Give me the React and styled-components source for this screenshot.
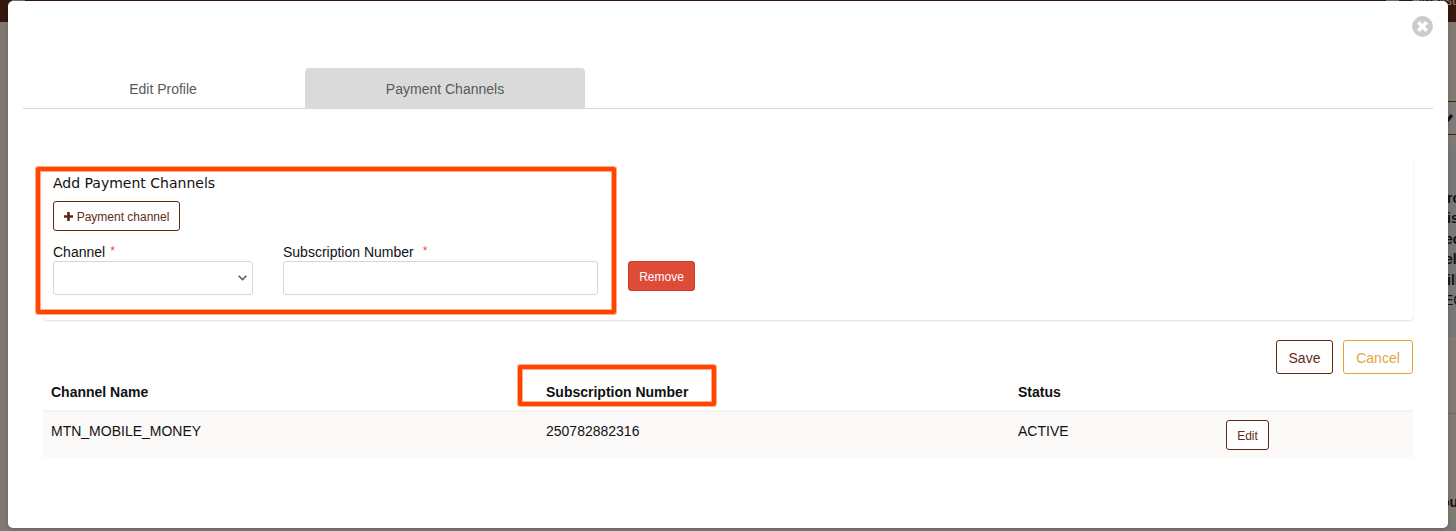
import React from "react";
import styled, { createGlobalStyle } from "styled-components";

const Global = createGlobalStyle`
  * { box-sizing: border-box; }
  body {
    margin: 0;
    overflow: hidden;
    font-family: "Liberation Sans", Arial, sans-serif;
    font-size: 14px;
    line-height: 20px;
    color: #111;
    background: #7a7a7a;
  }
`;

const Page = styled.div`
  position: relative;
  display: flex;
  flex-direction: column;
  width: 1456px;
  height: 531px;
  overflow: hidden;
`;

const TopBar = styled.header`
  display: flex;
  justify-content: space-between;
  flex: none;
  height: 22px;
  padding: 0 0 0 12px;
  background: #34180e;
`;

const Chip = styled.span`
  width: ${(p) => p.$w}px;
  height: 10px;
  background: #77706f;
`;

const TopUser = styled.span`
  display: flex;
  gap: 13px;
  width: 70px;
  color: #8b7d77;
  line-height: 0;
`;

const Backdrop = styled.div`
  display: flex;
  flex: 1;
  justify-content: space-between;
`;

const LeftRail = styled.div`
  width: 12px;
  height: 506px;
  background: #7e7a72;
`;

const RightRail = styled.div`
  display: flex;
  flex-direction: column;
  width: 16px;
  background: #787878;
`;

const Strip = styled.div`
  flex: none;
  height: ${(p) => p.$h}px;
  padding-top: ${(p) => p.$pt || 0}px;
  background: ${(p) => p.$bg};
  border-top: ${(p) => (p.$line ? `1px solid ${p.$line}` : "0")};
  overflow: hidden;
`;

const Clipped = styled.div`
  height: 20.4px;
  padding-left: ${(p) => p.$indent}px;
  overflow: hidden;
  white-space: nowrap;
  font-weight: ${(p) => (p.$light ? 400 : 700)};
`;

const Modal = styled.section`
  position: absolute;
  top: 1px;
  left: 8px;
  width: 1440px;
  height: 527px;
  padding: 15px;
  background: #fff;
  border-radius: 5px;
  box-shadow: 0 1px 4px rgba(0, 0, 0, 0.2);
`;

const CloseRow = styled.div`
  display: flex;
  justify-content: flex-end;
  height: 52px;
`;

const CloseButton = styled.button`
  width: 21px;
  height: 21px;
  padding: 0;
  border: 0;
  background: none;
  svg { display: block; }
`;

const Tabs = styled.nav`
  display: flex;
  gap: 2px;
  height: 41px;
  border-bottom: 1px solid #dadada;
`;

const Tab = styled.button`
  width: 280px;
  height: 40px;
  padding: 2px 0 0;
  border: 0;
  border-radius: 4px 4px 0 0;
  font: inherit;
  color: #58595b;
  background: ${(p) => (p.$active ? "#dadada" : "transparent")};
`;

const Content = styled.div`
  padding: 47px 20px 0;
`;

const Card = styled.div`
  height: 164px;
  margin-bottom: 20px;
  padding: 17px 10px 0;
  border-radius: 4px;
  background: #fff;
  box-shadow: 0 1px 2px rgba(0, 0, 0, 0.13);
`;

const Title = styled.h5`
  margin: 0 0 8px;
  font: 400 14px/20px "DejaVu Sans", sans-serif;
  color: #111;
`;

const tones = {
  brown: { fg: "#622b18", bg: "#fff", line: "#5f2813" },
  gold: { fg: "#e3a73f", bg: "#fff", line: "#e0a336" },
  red: { fg: "#fff", bg: "#dd4b39", line: "#d73925" },
};

const Button = styled.button`
  display: inline-flex;
  align-items: center;
  justify-content: center;
  gap: 4px;
  width: ${(p) => p.$w}px;
  height: ${(p) => (p.$small ? 30 : 34)}px;
  padding: ${(p) => (p.$small ? 1 : 2)}px 0 0;
  border: 1px solid ${(p) => tones[p.$tone].line};
  border-radius: 3px;
  font-family: inherit;
  font-size: ${(p) => (p.$small ? 12 : 14)}px;
  color: ${(p) => tones[p.$tone].fg};
  background: ${(p) => tones[p.$tone].bg};
`;

const Form = styled.div`
  display: flex;
  align-items: flex-end;
  gap: 30px;
  margin-top: 10px;
`;

const Field = styled.label`
  display: flex;
  flex-direction: column;
  width: ${(p) => p.$w}px;
`;

const LabelText = styled.span`
  display: flex;
  gap: ${(p) => p.$gap}px;
  height: 20px;
  line-height: 22px;
`;

const Required = styled.span`
  font-size: 12px;
  line-height: 21px;
  color: #e8503a;
`;

const Control = styled.span`
  display: flex;
  align-items: center;
  justify-content: flex-end;
  height: 34px;
  padding-right: 5px;
  border: 1px solid #d2d6de;
  border-radius: 3px;
  background: #fff;
`;

const RemoveSlot = styled.div`
  display: flex;
  height: 34px;
`;

const Actions = styled.div`
  display: flex;
  justify-content: flex-end;
  gap: 10px;
`;

const Table = styled.div`
  display: flex;
  flex-direction: column;
`;

const Row = styled.div`
  display: grid;
  grid-template-columns: 495px 472px 208px 1fr;
  height: ${(p) => (p.$head ? 36 : 48)}px;
  padding: ${(p) => (p.$head ? 8 : 9)}px 0 0 8px;
  font-weight: ${(p) => (p.$head ? 700 : 400)};
  background: ${(p) => (p.$head ? "#fff" : "#fbfaf8")};
  border-top: ${(p) => (p.$head ? "0" : "2px solid #f4f4f4")};
`;

const ActionCell = styled.span`
  display: flex;
  margin-top: -1px;
`;

const Highlight = styled.div`
  position: absolute;
  left: ${(p) => p.$x}px;
  top: ${(p) => p.$y}px;
  width: ${(p) => p.$w}px;
  height: ${(p) => p.$h}px;
  border: 4px solid #ff4500;
  border-radius: 2px;
  box-shadow: 0 0 0 1px rgba(255, 69, 0, 0.45), inset 0 0 0 1px rgba(255, 69, 0, 0.45);
  pointer-events: none;
`;

const rail = [
  ["ro", 7],
  ["is", 7],
  ["ec", 5],
  ["el", 5],
  ["ill", 7],
];

export default function App() {
  return (
    <Page>
      <Global />
      <TopBar>
        <Chip $w={13} />
        <TopUser>
          <Chip $w={15} />
          <span>Finalist</span>
        </TopUser>
      </TopBar>
      <Backdrop>
        <LeftRail />
        <RightRail>
          <Strip $h={58} $bg="#807b72" />
          <Strip $h={21} $bg="#807b72" $line="#77777a" />
          <Strip $h={33} $bg="#7b7b7b" $line="#46200f" $pt={4}>
            <svg width="16" height="24" viewBox="0 0 16 24">
              <path d="M5 13L8 14L12 9" stroke="#2e1208" strokeWidth="3.4" fill="none" />
            </svg>
          </Strip>
          <Strip $h={11} $bg="#807b72" $line="#46200f" />
          <Strip $h={193} $bg="#787878" $pt={43}>
            {rail.map(([text, indent]) => (
              <Clipped key={text} $indent={indent}>{text}</Clipped>
            ))}
            <Clipped $light $indent={4}>EC</Clipped>
          </Strip>
          <Strip $h={75} $bg="#807b72" $line="#86827a" />
          <Strip $h={108} $bg="#807b72" $line="#706c65" $pt={78}>
            <Clipped $indent={1}>ou</Clipped>
          </Strip>
        </RightRail>
      </Backdrop>

      <Modal>
        <CloseRow>
          <CloseButton aria-label="Close">
            <svg width="21" height="21" viewBox="0 0 21 21">
              <circle cx="10.5" cy="10.5" r="10.4" fill="#ccc" />
              <path d="M6.3 6.3L14.7 14.7M14.7 6.3L6.3 14.7" stroke="#fff" strokeWidth="3.7" />
            </svg>
          </CloseButton>
        </CloseRow>
        <Tabs>
          <Tab>Edit Profile</Tab>
          <Tab $active>Payment Channels</Tab>
        </Tabs>
        <Content>
          <Card>
            <Title>Add Payment Channels</Title>
            <Button $tone="brown" $small $w={127}>
              <svg width="9" height="9" viewBox="0 0 9 9">
                <path d="M0 4.5H9M4.5 0V9" stroke="#5f2813" strokeWidth="2.6" />
              </svg>
              Payment channel
            </Button>
            <Form>
              <Field $w={200}>
                <LabelText $gap={5}>Channel <Required>*</Required></LabelText>
                <Control>
                  <svg width="9" height="6" viewBox="0 0 9 6">
                    <path d="M0.7 0.8L4.5 4.7L8.3 0.8" fill="none" stroke="#555" strokeWidth="1.6" />
                  </svg>
                </Control>
              </Field>
              <Field $w={315}>
                <LabelText $gap={9}>Subscription Number <Required>*</Required></LabelText>
                <Control />
              </Field>
              <RemoveSlot>
                <Button $tone="red" $small $w={67}>Remove</Button>
              </RemoveSlot>
            </Form>
          </Card>
          <Actions>
            <Button $tone="brown" $w={57}>Save</Button>
            <Button $tone="gold" $w={70}>Cancel</Button>
          </Actions>
          <Table>
            <Row $head>
              <span>Channel Name</span>
              <span>Subscription Number</span>
              <span>Status</span>
            </Row>
            <Row>
              <span>MTN_MOBILE_MONEY</span>
              <span>250782882316</span>
              <span>ACTIVE</span>
              <ActionCell>
                <Button $tone="brown" $small $w={43}>Edit</Button>
              </ActionCell>
            </Row>
          </Table>
        </Content>
        <Highlight $x={28} $y={166} $w={580} $h={147} />
        <Highlight $x={510} $y={364} $w={198} $h={41} />
      </Modal>
    </Page>
  );
}
